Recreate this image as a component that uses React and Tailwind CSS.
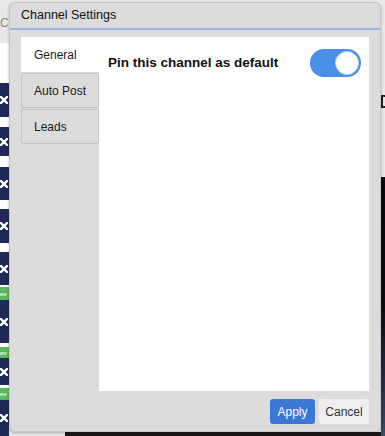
import { useState } from 'react';

// thin slices of the page behind the modal, top to bottom
const LEFT_STRIP = [
  { kind: 'grey', h: 43 },
  { kind: 'white', h: 40 },
  { kind: 'navy', h: 34 },
  { kind: 'white', h: 10 },
  { kind: 'navy', h: 29 },
  { kind: 'white', h: 11 },
  { kind: 'navy', h: 33 },
  { kind: 'white', h: 9 },
  { kind: 'navy', h: 34 },
  { kind: 'white', h: 9 },
  { kind: 'navy', h: 33 },
  { kind: 'white', h: 2 },
  { kind: 'green', h: 13 },
  { kind: 'navy', h: 43 },
  { kind: 'white', h: 4 },
  { kind: 'green', h: 11 },
  { kind: 'navy', h: 27 },
  { kind: 'white', h: 3 },
  { kind: 'green', h: 12 },
  { kind: 'navy', h: 36 },
];

function Cross() {
  return (
    <svg width="8" height="8" viewBox="0 0 8 8" className="block">
      <path d="M1 1L7 7M7 1L1 7" stroke="white" strokeWidth="2.4" strokeLinecap="square" />
    </svg>
  );
}

function Slice({ kind, h }) {
  if (kind === 'grey')
    return (
      <div className="bg-[#e8e8e8] flex items-center" style={{ height: h }}>
        <span className="text-[12px] leading-none text-[#8a8a8a] mt-[3px]">C</span>
      </div>
    );
  if (kind === 'white') return <div className="bg-white" style={{ height: h }} />;
  if (kind === 'green')
    return (
      <div className="bg-[#5cb85c] flex items-center" style={{ height: h }}>
        <span className="text-[6px] leading-none font-bold text-[#eaf6ea]">ev</span>
      </div>
    );
  return (
    <div className="bg-[#1e2b58] flex items-center" style={{ height: h }}>
      <Cross />
    </div>
  );
}

function Toggle({ on, onChange }) {
  return (
    <button
      type="button"
      onClick={() => onChange(!on)}
      className={`w-[51px] h-[28px] rounded-full flex items-center px-[2px] shrink-0 ${
        on ? 'bg-[#4a8fe7] justify-end' : 'bg-[#cfcfcf] justify-start'
      }`}
    >
      <span className="w-[24px] h-[24px] rounded-full bg-white border border-[#b9d3f5]" />
    </button>
  );
}

export default function App() {
  const [tab, setTab] = useState('General');
  const [pinned, setPinned] = useState(true);

  return (
    <div className="relative w-[385px] h-[436px] overflow-hidden bg-[#e8e8e8] font-['Liberation_Sans',Arial,sans-serif]">
      {/* page behind the dialog */}
      <div className="flex h-full">
        <div className="w-[9px] flex flex-col overflow-hidden">
          {LEFT_STRIP.map((s, i) => (
            <Slice key={i} {...s} />
          ))}
        </div>
        <div className="flex-1 flex flex-col">
          <div className="flex-1" />
          <div className="h-[4px] flex">
            <div className="w-[56px] bg-[#e6e6e6]" />
            <div className="flex-1 bg-[#1b1519]" />
          </div>
        </div>
        <div className="w-[4px] flex flex-col">
          <div className="h-[95px] bg-[#e8e8e8]" />
          <div className="h-[13px] bg-[#e8e8e8] border-y-2 border-l-2 border-[#222]" />
          <div className="h-[69px] bg-[#e8e8e8]" />
          <div className="flex-1 bg-gradient-to-b from-[#07070d] via-[#0b0c16] to-[#3a4a6a]" />
        </div>
      </div>

      {/* Channel Settings dialog */}
      <div className="absolute left-[9px] top-[2px] w-[372px] h-[430px] rounded-[6px] bg-[#dcdcdc] border border-[#c6c6c6] shadow-[0_1px_3px_rgba(0,0,0,0.25)] flex flex-col overflow-hidden">
        <div className="h-[27px] shrink-0 border-b-2 border-[#98b6e2] px-[11px] flex items-center">
          <span className="text-[12.5px] text-[#111]">Channel Settings</span>
        </div>

        <div className="flex-1 flex px-[11px] pt-[7px] min-h-0">
          <div className="w-[78px] shrink-0 flex flex-col gap-[1px]">
            {['General', 'Auto Post', 'Leads'].map((t) =>
              t === tab ? (
                <button
                  key={t}
                  type="button"
                  className="h-[35px] bg-white text-left pl-[13px] text-[12px] text-[#1a1a1a]"
                >
                  {t}
                </button>
              ) : (
                <button
                  key={t}
                  type="button"
                  onClick={() => setTab(t)}
                  className="h-[35px] bg-[#dcdcdc] border border-[#c2c2c2] rounded-[2px] text-left pl-[12px] text-[12px] text-[#1a1a1a]"
                >
                  {t}
                </button>
              )
            )}
          </div>

          <div className="flex-1 bg-white pl-[9px] pr-[8px] pt-[12px]">
            {tab === 'General' && (
              <div className="flex items-center justify-between">
                <span className="text-[13.5px] font-bold text-[#111]">Pin this channel as default</span>
                <Toggle on={pinned} onChange={setPinned} />
              </div>
            )}
          </div>
        </div>

        <div className="h-[40px] shrink-0 flex items-start justify-end gap-[4px] pt-[8px] pr-[11px]">
          <button type="button" className="w-[45px] h-[25px] rounded-[3px] bg-[#3a77d6] text-white text-[12px]">
            Apply
          </button>
          <button type="button" className="w-[50px] h-[25px] rounded-[3px] bg-[#eeeeee] text-[#333] text-[12px]">
            Cancel
          </button>
        </div>
      </div>
    </div>
  );
}
